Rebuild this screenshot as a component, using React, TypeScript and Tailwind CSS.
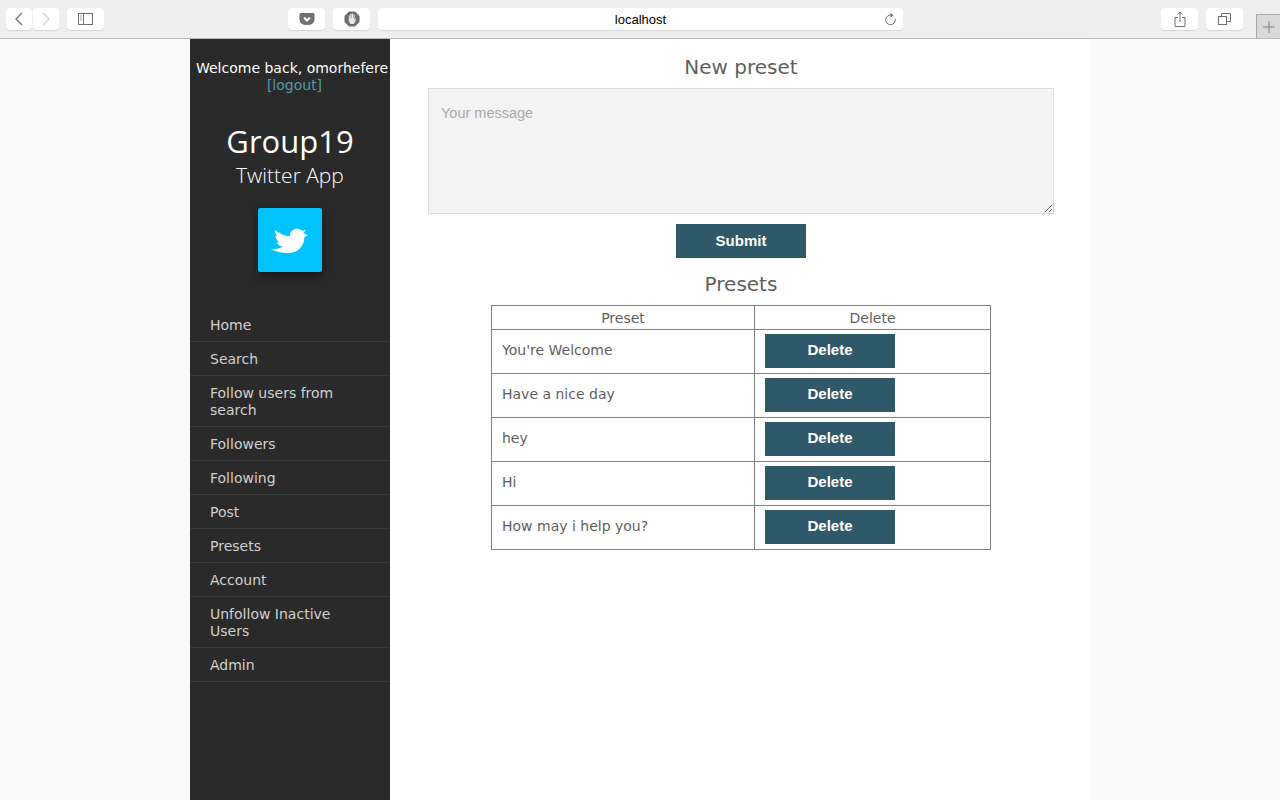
const navItems = [
  'Home',
  'Search',
  'Follow users from search',
  'Followers',
  'Following',
  'Post',
  'Presets',
  'Account',
  'Unfollow Inactive Users',
  'Admin',
];

const presets = ["You're Welcome", 'Have a nice day', 'hey', 'Hi', 'How may i help you?'];

function ToolButton({ className, children }: { className: string; children?: React.ReactNode }) {
  return (
    <div className={`h-[22px] bg-white rounded-[4px] shadow-[0_1px_0_#d8d8d8] flex items-center justify-center ${className}`}>
      {children}
    </div>
  );
}

function Toolbar() {
  return (
    <div className="relative h-[39px] bg-[#eeeeee] border-b border-[#b9b9b9] flex items-start pt-2 pl-[6px] font-['Liberation_Sans',sans-serif]">
      <ToolButton className="w-[26px]">
        <svg width="10" height="14" viewBox="0 0 10 14" fill="none" stroke="#707070" strokeWidth="1.3">
          <path d="M8 1 L2 7 L8 13" />
        </svg>
      </ToolButton>
      <ToolButton className="w-[26px] ml-px">
        <svg width="10" height="14" viewBox="0 0 10 14" fill="none" stroke="#d0d0d0" strokeWidth="1.3">
          <path d="M2 1 L8 7 L2 13" />
        </svg>
      </ToolButton>
      <ToolButton className="w-[37px] ml-2">
        <svg className="-ml-px" width="16" height="12" viewBox="0 0 16 12" fill="none" stroke="#707070">
          <rect x="1.5" y="0.5" width="14" height="11" />
          <path d="M6.5 0.5 V11.5" />
          <path d="M3 3 H5 M3 5 H5 M3 7 H5" stroke="#a0a0a0" />
        </svg>
      </ToolButton>
      <ToolButton className="w-[37px] ml-[184px]">
        <svg width="16" height="14" viewBox="0 0 16 14">
          <path d="M2 1 H14 Q15.500 1 15.500 2.500 V7 Q15.500 13 8 13 Q0.500 13 0.500 7 V2.500 Q0.500 1 2 1 Z" fill="#707070" />
          <path d="M5 5.500 L8 8.500 L11 5.500" fill="none" stroke="#ffffff" strokeWidth="2" />
        </svg>
      </ToolButton>
      <ToolButton className="w-[37px] ml-2">
        <svg width="16" height="16" viewBox="0 0 16 16">
          <path d="M5 0.500 H11 L15.500 5 V11 L11 15.500 H5 L0.500 11 V5 Z" fill="#6e6e6e" />
          <path d="M4.800 8 V4.500 H5.800 V7 H6.200 V3 H7.400 V7 H7.800 V2.500 H9 V7 H9.400 V3.500 H10.600 V9 L11.500 7.500 L12.300 8 L10 13 H6.500 L4.800 10 Z" fill="#e8e8e8" />
        </svg>
      </ToolButton>
      <ToolButton className="w-[525px] ml-2 relative">
        <span className="text-[13px] text-black pt-[2px]">localhost</span>
        <svg className="absolute right-[6px] top-[5px]" width="13" height="13" viewBox="0 0 13 13" fill="none" stroke="#707070">
          <path d="M7.500 2.200 A4.800 4.800 0 1 0 11.200 6" />
          <path d="M6.500 0 L9.500 2.200 L6.500 4.500 Z" fill="#707070" stroke="none" />
        </svg>
      </ToolButton>
      <ToolButton className="w-[37px] ml-[258px]">
        <svg width="12" height="16" viewBox="0 0 12 16" fill="none" stroke="#707070">
          <path d="M4 6.500 H1 V15.500 H11 V6.500 H8" />
          <path d="M6 11 V1 M3.500 3.500 L6 1 L8.500 3.500" />
        </svg>
      </ToolButton>
      <ToolButton className="w-[37px] ml-2">
        <svg width="13" height="12" viewBox="0 0 13 12" fill="none" stroke="#707070">
          <rect x="0.500" y="3.500" width="8" height="8" />
          <path d="M3.500 3.500 V0.500 H12.500 V8.500 H8.500" />
        </svg>
      </ToolButton>
      <div className="absolute right-0 top-[14px] w-6 h-6 bg-[#d9d9d9] border-l border-t border-[#a8a8a8] flex items-center justify-center">
        <svg width="12" height="12" viewBox="0 0 12 12" stroke="#808080">
          <path d="M6 0 V12 M0 6 H12" />
        </svg>
      </div>
    </div>
  );
}

function Sidebar() {
  return (
    <aside className="w-[200px] shrink-0 bg-[#2a2a2a] flex flex-col">
      <div className="pt-[21px] text-center text-[14px] leading-[17px] whitespace-nowrap pl-[3px] -mr-px">
        <div className="text-white">Welcome back, omorhefere</div>
        <div className="text-[#4f9da6] pl-[5px]">[logout]</div>
      </div>
      <h1 className="mt-[25px] text-center text-white text-[31px] leading-[44px] font-['Open_Sans',sans-serif]">Group19</h1>
      <div className="text-center text-white text-[21px] leading-[24px] font-['Open_Sans',sans-serif] font-light">Twitter App</div>
      <div className="mt-[21px] mx-auto w-16 h-16 rounded-[2px] bg-[#00c3fb] shadow-[0_4px_10px_rgba(0,0,0,0.5)] flex items-center justify-center">
        <svg className="-ml-[2px]" width="54" height="43" viewBox="0 0 150 120" fill="#ffffff">
          <path d="M36 30 C50 42 62 47 78 48 C76 36 86 27 98 27 C104 27 109 30 112 33 L122 31 L115 39 L128 46 L118 50 C118 75 100 95 72 95 C55 95 38 92 23 84 C35 86 48 84 58 77 C50 76 44 72 41 66 L47 65 C42 60 37 54 37 47 L43 48 C37 42 34 36 36 30 Z" />
        </svg>
      </div>
      <nav className="mt-[36px] flex flex-col">
        {navItems.map((item) => (
          <a key={item} className="block pl-5 pr-[40px] pt-[9px] pb-[7px] text-[14px] leading-[17px] text-[#d0d0d0] border-b border-[#3a3a3a]">
            {item}
          </a>
        ))}
      </nav>
    </aside>
  );
}

function PresetRow({ text }: { text: string }) {
  return (
    <tr className="h-11">
      <td className="border border-[#808080] pl-[10px] pb-[2px] text-[14px]">{text}</td>
      <td className="border border-[#808080] pl-[10px] pb-[2px]">
        <button className="block w-[130px] h-[34px] bg-[#2f5868] text-white font-bold text-[15px] font-['Liberation_Sans',sans-serif]">
          Delete
        </button>
      </td>
    </tr>
  );
}

export default function App() {
  return (
    <div className="h-[800px] overflow-hidden bg-[#fafafa] font-['DejaVu_Sans',sans-serif] text-[#5f5f5f]">
      <Toolbar />
      <div className="w-[900px] h-[761px] ml-[190px] bg-white flex">
        <Sidebar />
        <main className="flex-1 flex flex-col items-center pl-[2px]">
          <h2 className="mt-[14px] text-[20px] leading-[28px]">New preset</h2>
          <textarea
            placeholder="Your message"
            className="mt-[7px] w-[626px] h-[126px] bg-[#f4f4f4] border border-[#dddddd] px-3 py-[14px] text-[14.5px] leading-[20px] font-['Liberation_Sans',sans-serif] placeholder:text-[#a8a8a8] outline-none resize"
          />
          <button className="mt-[10px] w-[130px] h-[34px] bg-[#2f5868] text-white font-bold text-[15px] font-['Liberation_Sans',sans-serif]">
            Submit
          </button>
          <h2 className="mt-3 text-[20px] leading-[28px]">Presets</h2>
          <table className="mt-[7px] w-[500px] border-collapse table-fixed">
            <thead>
              <tr className="h-6">
                <th className="w-[263px] border border-[#808080] pt-px font-normal text-[14px]">Preset</th>
                <th className="border border-[#808080] pt-px font-normal text-[14px]">Delete</th>
              </tr>
            </thead>
            <tbody>
              {presets.map((p) => (
                <PresetRow key={p} text={p} />
              ))}
            </tbody>
          </table>
        </main>
      </div>
    </div>
  );
}
